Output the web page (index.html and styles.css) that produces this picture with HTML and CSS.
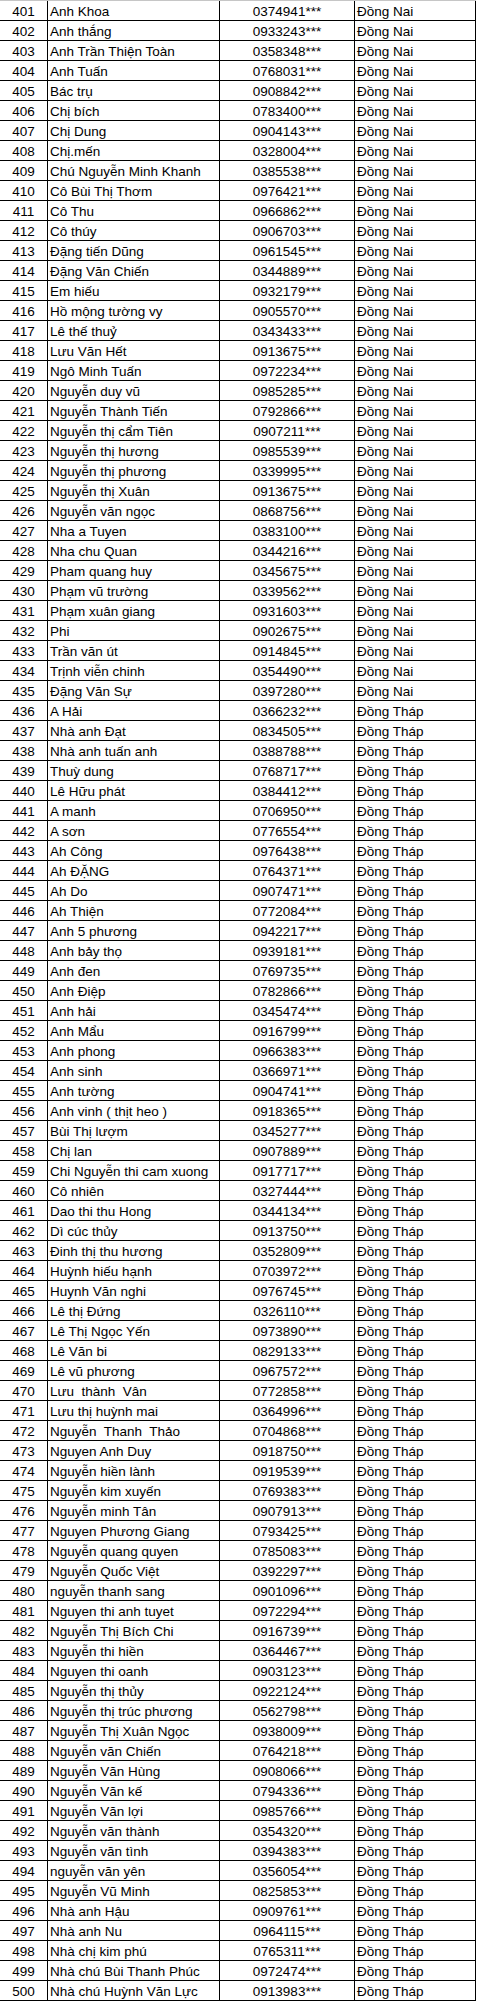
FILE: index.html
```html
<!DOCTYPE html>
<html lang="vi">
<head>
<meta charset="utf-8">
<title>Danh sách</title>
<link rel="stylesheet" href="styles.css">
</head>
<body>
<div class="sheet">
<div class="row"><div class="c num">401</div><div class="c name">Anh Khoa</div><div class="c phone">0374941***</div><div class="c prov">Đồng Nai</div></div>
<div class="row"><div class="c num">402</div><div class="c name">Anh thắng</div><div class="c phone">0933243***</div><div class="c prov">Đồng Nai</div></div>
<div class="row"><div class="c num">403</div><div class="c name">Anh Trần Thiện Toàn</div><div class="c phone">0358348***</div><div class="c prov">Đồng Nai</div></div>
<div class="row"><div class="c num">404</div><div class="c name">Anh Tuấn</div><div class="c phone">0768031***</div><div class="c prov">Đồng Nai</div></div>
<div class="row"><div class="c num">405</div><div class="c name">Bác trụ</div><div class="c phone">0908842***</div><div class="c prov">Đồng Nai</div></div>
<div class="row"><div class="c num">406</div><div class="c name">Chị bích</div><div class="c phone">0783400***</div><div class="c prov">Đồng Nai</div></div>
<div class="row"><div class="c num">407</div><div class="c name">Chị Dung</div><div class="c phone">0904143***</div><div class="c prov">Đồng Nai</div></div>
<div class="row"><div class="c num">408</div><div class="c name">Chị.mến</div><div class="c phone">0328004***</div><div class="c prov">Đồng Nai</div></div>
<div class="row"><div class="c num">409</div><div class="c name">Chú Nguyễn Minh Khanh</div><div class="c phone">0385538***</div><div class="c prov">Đồng Nai</div></div>
<div class="row"><div class="c num">410</div><div class="c name">Cô Bùi Thị Thơm</div><div class="c phone">0976421***</div><div class="c prov">Đồng Nai</div></div>
<div class="row"><div class="c num">411</div><div class="c name">Cô Thu</div><div class="c phone">0966862***</div><div class="c prov">Đồng Nai</div></div>
<div class="row"><div class="c num">412</div><div class="c name">Cô thúy</div><div class="c phone">0906703***</div><div class="c prov">Đồng Nai</div></div>
<div class="row"><div class="c num">413</div><div class="c name">Đặng tiến Dũng</div><div class="c phone">0961545***</div><div class="c prov">Đồng Nai</div></div>
<div class="row"><div class="c num">414</div><div class="c name">Đặng Văn Chiến</div><div class="c phone">0344889***</div><div class="c prov">Đồng Nai</div></div>
<div class="row"><div class="c num">415</div><div class="c name">Em hiếu</div><div class="c phone">0932179***</div><div class="c prov">Đồng Nai</div></div>
<div class="row"><div class="c num">416</div><div class="c name">Hồ mộng tường vy</div><div class="c phone">0905570***</div><div class="c prov">Đồng Nai</div></div>
<div class="row"><div class="c num">417</div><div class="c name">Lê thế thuỷ</div><div class="c phone">0343433***</div><div class="c prov">Đồng Nai</div></div>
<div class="row"><div class="c num">418</div><div class="c name">Lưu Văn Hết</div><div class="c phone">0913675***</div><div class="c prov">Đồng Nai</div></div>
<div class="row"><div class="c num">419</div><div class="c name">Ngô Minh Tuấn</div><div class="c phone">0972234***</div><div class="c prov">Đồng Nai</div></div>
<div class="row"><div class="c num">420</div><div class="c name">Nguyễn duy vũ</div><div class="c phone">0985285***</div><div class="c prov">Đồng Nai</div></div>
<div class="row"><div class="c num">421</div><div class="c name">Nguyễn Thành Tiến</div><div class="c phone">0792866***</div><div class="c prov">Đồng Nai</div></div>
<div class="row"><div class="c num">422</div><div class="c name">Nguyễn thị cẩm Tiên</div><div class="c phone">0907211***</div><div class="c prov">Đồng Nai</div></div>
<div class="row"><div class="c num">423</div><div class="c name">Nguyễn thị hương</div><div class="c phone">0985539***</div><div class="c prov">Đồng Nai</div></div>
<div class="row"><div class="c num">424</div><div class="c name">Nguyễn thị phương</div><div class="c phone">0339995***</div><div class="c prov">Đồng Nai</div></div>
<div class="row"><div class="c num">425</div><div class="c name">Nguyễn thị Xuân</div><div class="c phone">0913675***</div><div class="c prov">Đồng Nai</div></div>
<div class="row"><div class="c num">426</div><div class="c name">Nguyễn văn ngọc</div><div class="c phone">0868756***</div><div class="c prov">Đồng Nai</div></div>
<div class="row"><div class="c num">427</div><div class="c name">Nha a Tuyen</div><div class="c phone">0383100***</div><div class="c prov">Đồng Nai</div></div>
<div class="row"><div class="c num">428</div><div class="c name">Nha chu Quan</div><div class="c phone">0344216***</div><div class="c prov">Đồng Nai</div></div>
<div class="row"><div class="c num">429</div><div class="c name">Pham quang huy</div><div class="c phone">0345675***</div><div class="c prov">Đồng Nai</div></div>
<div class="row"><div class="c num">430</div><div class="c name">Phạm vũ trường</div><div class="c phone">0339562***</div><div class="c prov">Đồng Nai</div></div>
<div class="row"><div class="c num">431</div><div class="c name">Phạm xuân giang</div><div class="c phone">0931603***</div><div class="c prov">Đồng Nai</div></div>
<div class="row"><div class="c num">432</div><div class="c name">Phi</div><div class="c phone">0902675***</div><div class="c prov">Đồng Nai</div></div>
<div class="row"><div class="c num">433</div><div class="c name">Trần văn út</div><div class="c phone">0914845***</div><div class="c prov">Đồng Nai</div></div>
<div class="row"><div class="c num">434</div><div class="c name">Trịnh viễn chinh</div><div class="c phone">0354490***</div><div class="c prov">Đồng Nai</div></div>
<div class="row"><div class="c num">435</div><div class="c name">Đặng Văn Sự</div><div class="c phone">0397280***</div><div class="c prov">Đồng Nai</div></div>
<div class="row"><div class="c num">436</div><div class="c name">A Hải</div><div class="c phone">0366232***</div><div class="c prov">Đồng Tháp</div></div>
<div class="row"><div class="c num">437</div><div class="c name">Nhà anh Đạt</div><div class="c phone">0834505***</div><div class="c prov">Đồng Tháp</div></div>
<div class="row"><div class="c num">438</div><div class="c name">Nhà anh tuấn anh</div><div class="c phone">0388788***</div><div class="c prov">Đồng Tháp</div></div>
<div class="row"><div class="c num">439</div><div class="c name">Thuỳ dung</div><div class="c phone">0768717***</div><div class="c prov">Đồng Tháp</div></div>
<div class="row"><div class="c num">440</div><div class="c name">Lê Hữu phát</div><div class="c phone">0384412***</div><div class="c prov">Đồng Tháp</div></div>
<div class="row"><div class="c num">441</div><div class="c name">A manh</div><div class="c phone">0706950***</div><div class="c prov">Đồng Tháp</div></div>
<div class="row"><div class="c num">442</div><div class="c name">A sơn</div><div class="c phone">0776554***</div><div class="c prov">Đồng Tháp</div></div>
<div class="row"><div class="c num">443</div><div class="c name">Ah Công</div><div class="c phone">0976438***</div><div class="c prov">Đồng Tháp</div></div>
<div class="row"><div class="c num">444</div><div class="c name">Ah ĐẶNG</div><div class="c phone">0764371***</div><div class="c prov">Đồng Tháp</div></div>
<div class="row"><div class="c num">445</div><div class="c name">Ah Do</div><div class="c phone">0907471***</div><div class="c prov">Đồng Tháp</div></div>
<div class="row"><div class="c num">446</div><div class="c name">Ah Thiện</div><div class="c phone">0772084***</div><div class="c prov">Đồng Tháp</div></div>
<div class="row"><div class="c num">447</div><div class="c name">Anh 5 phương</div><div class="c phone">0942217***</div><div class="c prov">Đồng Tháp</div></div>
<div class="row"><div class="c num">448</div><div class="c name">Anh bảy thọ</div><div class="c phone">0939181***</div><div class="c prov">Đồng Tháp</div></div>
<div class="row"><div class="c num">449</div><div class="c name">Anh đen</div><div class="c phone">0769735***</div><div class="c prov">Đồng Tháp</div></div>
<div class="row"><div class="c num">450</div><div class="c name">Anh Điệp</div><div class="c phone">0782866***</div><div class="c prov">Đồng Tháp</div></div>
<div class="row"><div class="c num">451</div><div class="c name">Anh hải</div><div class="c phone">0345474***</div><div class="c prov">Đồng Tháp</div></div>
<div class="row"><div class="c num">452</div><div class="c name">Anh Mẩu</div><div class="c phone">0916799***</div><div class="c prov">Đồng Tháp</div></div>
<div class="row"><div class="c num">453</div><div class="c name">Anh phong</div><div class="c phone">0966383***</div><div class="c prov">Đồng Tháp</div></div>
<div class="row"><div class="c num">454</div><div class="c name">Anh sinh</div><div class="c phone">0366971***</div><div class="c prov">Đồng Tháp</div></div>
<div class="row"><div class="c num">455</div><div class="c name">Anh tường</div><div class="c phone">0904741***</div><div class="c prov">Đồng Tháp</div></div>
<div class="row"><div class="c num">456</div><div class="c name">Anh vinh ( thịt heo )</div><div class="c phone">0918365***</div><div class="c prov">Đồng Tháp</div></div>
<div class="row"><div class="c num">457</div><div class="c name">Bùi Thị lượm</div><div class="c phone">0345277***</div><div class="c prov">Đồng Tháp</div></div>
<div class="row"><div class="c num">458</div><div class="c name">Chị lan</div><div class="c phone">0907889***</div><div class="c prov">Đồng Tháp</div></div>
<div class="row"><div class="c num">459</div><div class="c name">Chi Nguyễn thi cam xuong</div><div class="c phone">0917717***</div><div class="c prov">Đồng Tháp</div></div>
<div class="row"><div class="c num">460</div><div class="c name">Cô nhiên</div><div class="c phone">0327444***</div><div class="c prov">Đồng Tháp</div></div>
<div class="row"><div class="c num">461</div><div class="c name">Dao thi thu Hong</div><div class="c phone">0344134***</div><div class="c prov">Đồng Tháp</div></div>
<div class="row"><div class="c num">462</div><div class="c name">Dì cúc thủy</div><div class="c phone">0913750***</div><div class="c prov">Đồng Tháp</div></div>
<div class="row"><div class="c num">463</div><div class="c name">Đinh thị thu hương</div><div class="c phone">0352809***</div><div class="c prov">Đồng Tháp</div></div>
<div class="row"><div class="c num">464</div><div class="c name">Huỳnh hiếu hạnh</div><div class="c phone">0703972***</div><div class="c prov">Đồng Tháp</div></div>
<div class="row"><div class="c num">465</div><div class="c name">Huynh Văn nghi</div><div class="c phone">0976745***</div><div class="c prov">Đồng Tháp</div></div>
<div class="row"><div class="c num">466</div><div class="c name">Lê thị Đứng</div><div class="c phone">0326110***</div><div class="c prov">Đồng Tháp</div></div>
<div class="row"><div class="c num">467</div><div class="c name">Lê Thị Ngọc Yến</div><div class="c phone">0973890***</div><div class="c prov">Đồng Tháp</div></div>
<div class="row"><div class="c num">468</div><div class="c name">Lê Văn bi</div><div class="c phone">0829133***</div><div class="c prov">Đồng Tháp</div></div>
<div class="row"><div class="c num">469</div><div class="c name">Lê vũ phương</div><div class="c phone">0967572***</div><div class="c prov">Đồng Tháp</div></div>
<div class="row"><div class="c num">470</div><div class="c name">Lưu&nbsp; thành&nbsp; Vân</div><div class="c phone">0772858***</div><div class="c prov">Đồng Tháp</div></div>
<div class="row"><div class="c num">471</div><div class="c name">Lưu thị huỳnh mai</div><div class="c phone">0364996***</div><div class="c prov">Đồng Tháp</div></div>
<div class="row"><div class="c num">472</div><div class="c name">Nguyễn&nbsp; Thanh&nbsp; Thảo</div><div class="c phone">0704868***</div><div class="c prov">Đồng Tháp</div></div>
<div class="row"><div class="c num">473</div><div class="c name">Nguyen Anh Duy</div><div class="c phone">0918750***</div><div class="c prov">Đồng Tháp</div></div>
<div class="row"><div class="c num">474</div><div class="c name">Nguyễn hiền lành</div><div class="c phone">0919539***</div><div class="c prov">Đồng Tháp</div></div>
<div class="row"><div class="c num">475</div><div class="c name">Nguyễn kim xuyến</div><div class="c phone">0769383***</div><div class="c prov">Đồng Tháp</div></div>
<div class="row"><div class="c num">476</div><div class="c name">Nguyễn minh Tân</div><div class="c phone">0907913***</div><div class="c prov">Đồng Tháp</div></div>
<div class="row"><div class="c num">477</div><div class="c name">Nguyen Phương Giang</div><div class="c phone">0793425***</div><div class="c prov">Đồng Tháp</div></div>
<div class="row"><div class="c num">478</div><div class="c name">Nguyễn quang quyen</div><div class="c phone">0785083***</div><div class="c prov">Đồng Tháp</div></div>
<div class="row"><div class="c num">479</div><div class="c name">Nguyễn Quốc Việt</div><div class="c phone">0392297***</div><div class="c prov">Đồng Tháp</div></div>
<div class="row"><div class="c num">480</div><div class="c name">nguyễn thanh sang</div><div class="c phone">0901096***</div><div class="c prov">Đồng Tháp</div></div>
<div class="row"><div class="c num">481</div><div class="c name">Nguyen thi anh tuyet</div><div class="c phone">0972294***</div><div class="c prov">Đồng Tháp</div></div>
<div class="row"><div class="c num">482</div><div class="c name">Nguyễn Thị Bích Chi</div><div class="c phone">0916739***</div><div class="c prov">Đồng Tháp</div></div>
<div class="row"><div class="c num">483</div><div class="c name">Nguyễn thi hiền</div><div class="c phone">0364467***</div><div class="c prov">Đồng Tháp</div></div>
<div class="row"><div class="c num">484</div><div class="c name">Nguyen thi oanh</div><div class="c phone">0903123***</div><div class="c prov">Đồng Tháp</div></div>
<div class="row"><div class="c num">485</div><div class="c name">Nguyễn thị thủy</div><div class="c phone">0922124***</div><div class="c prov">Đồng Tháp</div></div>
<div class="row"><div class="c num">486</div><div class="c name">Nguyễn thị trúc phương</div><div class="c phone">0562798***</div><div class="c prov">Đồng Tháp</div></div>
<div class="row"><div class="c num">487</div><div class="c name">Nguyễn Thị Xuân Ngọc</div><div class="c phone">0938009***</div><div class="c prov">Đồng Tháp</div></div>
<div class="row"><div class="c num">488</div><div class="c name">Nguyễn văn Chiến</div><div class="c phone">0764218***</div><div class="c prov">Đồng Tháp</div></div>
<div class="row"><div class="c num">489</div><div class="c name">Nguyễn Văn Hùng</div><div class="c phone">0908066***</div><div class="c prov">Đồng Tháp</div></div>
<div class="row"><div class="c num">490</div><div class="c name">Nguyễn Văn kế</div><div class="c phone">0794336***</div><div class="c prov">Đồng Tháp</div></div>
<div class="row"><div class="c num">491</div><div class="c name">Nguyễn Văn lợi</div><div class="c phone">0985766***</div><div class="c prov">Đồng Tháp</div></div>
<div class="row"><div class="c num">492</div><div class="c name">Nguyễn văn thành</div><div class="c phone">0354320***</div><div class="c prov">Đồng Tháp</div></div>
<div class="row"><div class="c num">493</div><div class="c name">Nguyễn văn tình</div><div class="c phone">0394383***</div><div class="c prov">Đồng Tháp</div></div>
<div class="row"><div class="c num">494</div><div class="c name">nguyễn văn yên</div><div class="c phone">0356054***</div><div class="c prov">Đồng Tháp</div></div>
<div class="row"><div class="c num">495</div><div class="c name">Nguyễn Vũ Minh</div><div class="c phone">0825853***</div><div class="c prov">Đồng Tháp</div></div>
<div class="row"><div class="c num">496</div><div class="c name">Nhà anh Hậu</div><div class="c phone">0909761***</div><div class="c prov">Đồng Tháp</div></div>
<div class="row"><div class="c num">497</div><div class="c name">Nhà anh Nu</div><div class="c phone">0964115***</div><div class="c prov">Đồng Tháp</div></div>
<div class="row"><div class="c num">498</div><div class="c name">Nhà chị kim phú</div><div class="c phone">0765311***</div><div class="c prov">Đồng Tháp</div></div>
<div class="row"><div class="c num">499</div><div class="c name">Nhà chú Bùi Thanh Phúc</div><div class="c phone">0972474***</div><div class="c prov">Đồng Tháp</div></div>
<div class="row"><div class="c num">500</div><div class="c name">Nhà chú Huỳnh Văn Lực</div><div class="c phone">0913983***</div><div class="c prov">Đồng Tháp</div></div>
</div>
</body>
</html>
```
FILE: styles.css
```css
html, body {
  margin: 0;
  padding: 0;
  background: #ffffff;
}
.sheet {
  width: 476px;
  border-top: 1px solid #c6c6c6;
  font-family: "Liberation Sans", Arial, sans-serif;
  font-size: 13.5px;
  color: #000000;
}
.row {
  display: grid;
  grid-template-columns: 48px 172px 135px 121px;
  height: 20px;
  box-sizing: border-box;
  border-bottom: 1px solid #000000;
}
.c {
  box-sizing: border-box;
  border-right: 1px solid #000000;
  padding-top: 3px;
  line-height: 16px;
  white-space: nowrap;
  overflow: hidden;
}
.num {
  text-align: center;
}
.name {
  padding-left: 2px;
}
.phone {
  text-align: center;
}
.prov {
  padding-left: 2px;
}
```
